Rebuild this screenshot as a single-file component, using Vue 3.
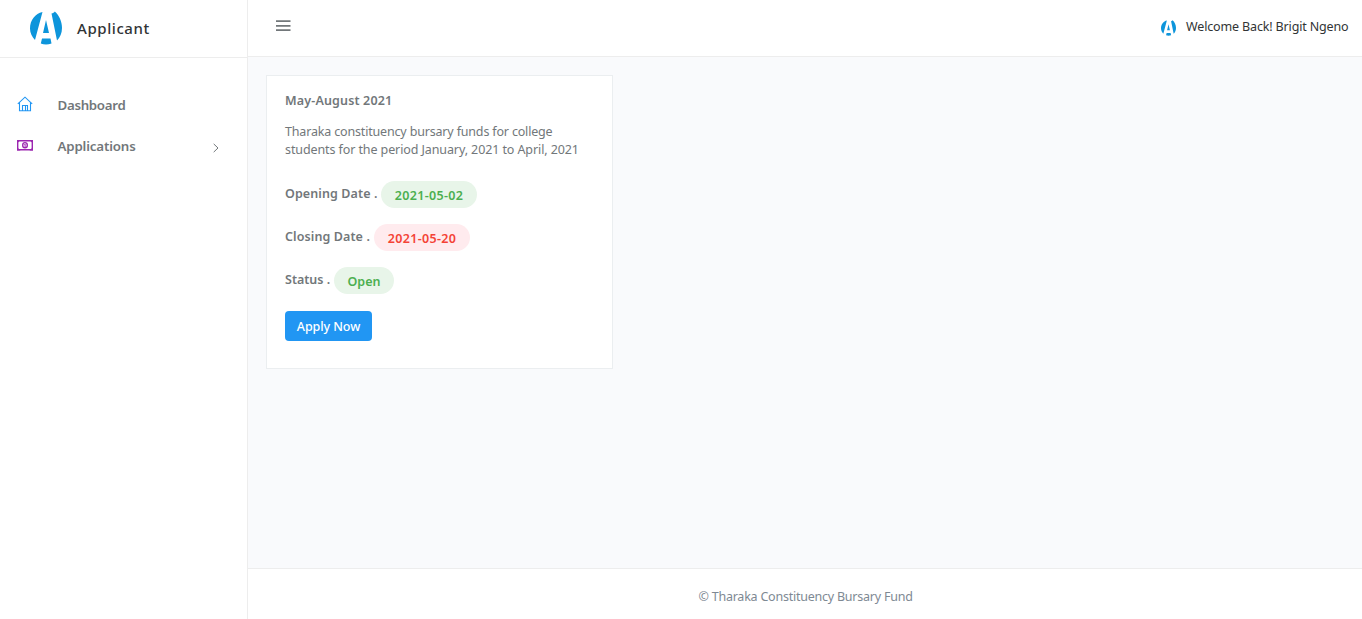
<script setup>
const rows = [
  { label: 'Opening Date .', value: '2021-05-02', tone: 'green', cls: 'opening' },
  { label: 'Closing Date .', value: '2021-05-20', tone: 'red', cls: 'closing' },
  { label: 'Status .', value: 'Open', tone: 'green', cls: 'status' },
]
const logo = 'M12.5 .5 5 28.5C2 25.5 0 21.5 0 17 0 8.5 5.3 2 12.5 .5Z M24.8 0C29.2 4 32 10 32 16.5 32 21.5 30 26 27 29L21.5 2C23 1.800 24.200 1 24.800 0Z M16 8.500 19 21.500H13Z M12 27H20.500L21.500 32C18 33.200 14 33.200 10.800 32Z'
</script>

<template>
  <div class="page">
    <aside class="sidebar">
      <div class="brand">
        <svg class="brand-logo" viewBox="0 0 32 33"><path :d="logo" /></svg>
        <span class="brand-name">Applicant</span>
      </div>
      <nav class="nav">
        <a class="nav-item">
          <svg class="nav-icon home" viewBox="0 0 16 16"><path d="M.8 7.800 8 1.200l7.200 6.600M2.500 6.500v8.200h11V6.500M5.500 14.500V9.500h5v5M8.500 10v4.500" /></svg>
          <span class="nav-label dash">Dashboard</span>
        </a>
        <a class="nav-item">
          <svg class="nav-icon money" viewBox="0 0 16 16"><path d="M.7 3.700h14.600v9.100H.7Z" /><path class="corner" d="M0 3h3.500L0 6.500ZM16 3h-3.500L16 6.500ZM0 13.500h3.500L0 10ZM16 13.500h-3.500L16 10Z" /><ellipse cx="8" cy="8.200" rx="2.300" ry="2.600" /><path class="digit" d="M7.500 7.500 8.100 7V10" /></svg>
          <span class="nav-label apps">Applications</span>
          <svg class="chevron" viewBox="0 0 6 10"><path d="M.7 .9 5 5 .7 9.100" /></svg>
        </a>
      </nav>
    </aside>
    <div class="content">
      <header class="topbar">
        <svg class="burger" viewBox="0 0 15 12"><path d="M0 1.200h14.500M0 5.900h14.500M0 10.200h14.500" /></svg>
        <div class="user">
          <svg class="user-logo" viewBox="0 0 32 33"><path :d="logo" /></svg>
          <span class="welcome">Welcome Back! Brigit Ngeno</span>
        </div>
      </header>
      <main class="main">
        <section class="card">
          <h6 class="title"><span>May-August 2021</span></h6>
          <p class="desc"><span class="d1">Tharaka constituency bursary funds for college</span><br><span class="d2">students for the period January, 2021 to April, 2021</span></p>
          <div v-for="r in rows" :key="r.label" class="row" :class="r.cls">
            <span class="row-label">{{ r.label }}</span>
            <span class="badge" :class="r.tone">{{ r.value }}</span>
          </div>
          <button class="apply">Apply Now</button>
        </section>
      </main>
      <footer class="footer"><span>© Tharaka Constituency Bursary Fund</span></footer>
    </div>
  </div>
</template>

<style scoped>
.page {
  display: flex;
  width: 1362px;
  height: 619px;
  overflow: hidden;
  background: #f9fafc;
  color: #72777a;
  font-family: "Noto Sans", "Open Sans", sans-serif;
  font-size: 12.5px;
}
.page * { box-sizing: border-box; }
span { white-space: nowrap; }
.sidebar {
  width: 248px;
  flex: none;
  background: #fff;
  border-right: 1px solid #ededed;
}
.brand {
  display: flex;
  height: 58px;
  padding: 11px 0 0 30px;
  border-bottom: 1px solid #ededed;
}
.brand-logo { width: 32px; height: 34px; fill: #0d95db; }
.brand-name {
  margin: 5px 0 0 15px;
  color: #313435;
  font-size: 15px;
  font-weight: 500;
  line-height: 24px;
  letter-spacing: .57px;
}
.nav { padding-top: 26px; }
.nav-item { display: flex; height: 41px; align-items: center; padding-left: 17px; }
.nav-icon { width: 16px; height: 16px; fill: none; stroke-width: 1.1; margin-top: -1px; }
.home { stroke: #2196f3; }
.money { stroke: #9c27b0; stroke-width: 1.4; }
.corner { fill: #9c27b0; stroke: none; }
.digit { stroke-width: 1; }
.nav-label { margin-left: 24.5px; font-size: 13.3px; font-weight: 600; line-height: 20px; }
.dash { letter-spacing: -.3px; }
.apps { letter-spacing: -.16px; }
.chevron {
  width: 6px;
  height: 10px;
  margin: 4px 28px 0 auto;
  fill: none;
  stroke: #72777a;
}
.content { display: flex; flex: 1; flex-direction: column; }
.topbar {
  display: flex;
  height: 57px;
  justify-content: space-between;
  padding: 0 13.500px 0 28px;
  background: #fff;
  border-bottom: 1px solid #ededed;
}
.burger { width: 15px; height: 12px; margin-top: 20px; fill: none; stroke: #72777a; stroke-width: 1.8; }
.user { display: flex; }
.user-logo { width: 15px; height: 16px; margin: 20px 10px 0 0; fill: #0d95db; }
.welcome { color: #313435; line-height: 18px; margin-top: 18px; letter-spacing: -.15px; }
.main { flex: 1; padding: 18px; }
.card {
  width: 347px;
  height: 294px;
  padding: 15px 18px;
  background: #fff;
  border: 1px solid #ebeef0;
}
.title { margin: 0; font-size: 12.5px; font-weight: 600; line-height: 20px; letter-spacing: .15px; }
.desc { margin: 12px 0 0; line-height: 18px; }
.d1 { letter-spacing: -.17px; }
.d2 { letter-spacing: -.1px; }
.row { display: flex; height: 27px; margin-top: 16px; font-weight: 600; }
.row.opening { margin-top: 22px; }
.row-label { line-height: 26px; letter-spacing: .1px; }
.badge {
  width: 96px;
  height: 27px;
  margin-left: auto;
  border-radius: 14px;
  line-height: 29px;
  text-align: center;
  letter-spacing: .33px;
}
.row.opening { width: 192px; }
.row.closing { width: 185px; }
.row.status { width: 109px; }
.status .badge { width: 60px; letter-spacing: 0; }
.status .row-label { letter-spacing: 0; }
.green { color: #4caf50; background: #e8f5e9; }
.red { color: #f44336; background: #ffebee; }
.apply {
  width: 87px;
  height: 30px;
  margin-top: 17px;
  padding: 0;
  border: 0;
  border-radius: 4px;
  background: #2196f3;
  color: #fff;
  font: 500 12.5px/31px "Noto Sans", sans-serif;
  letter-spacing: -.08px;
  white-space: nowrap;
}
.footer {
  height: 51px;
  background: #fff;
  border-top: 1px solid #ededed;
  color: #7e8993;
  line-height: 18px;
  letter-spacing: -.23px;
  padding: 19px 0 0 450.5px;
}
</style>
